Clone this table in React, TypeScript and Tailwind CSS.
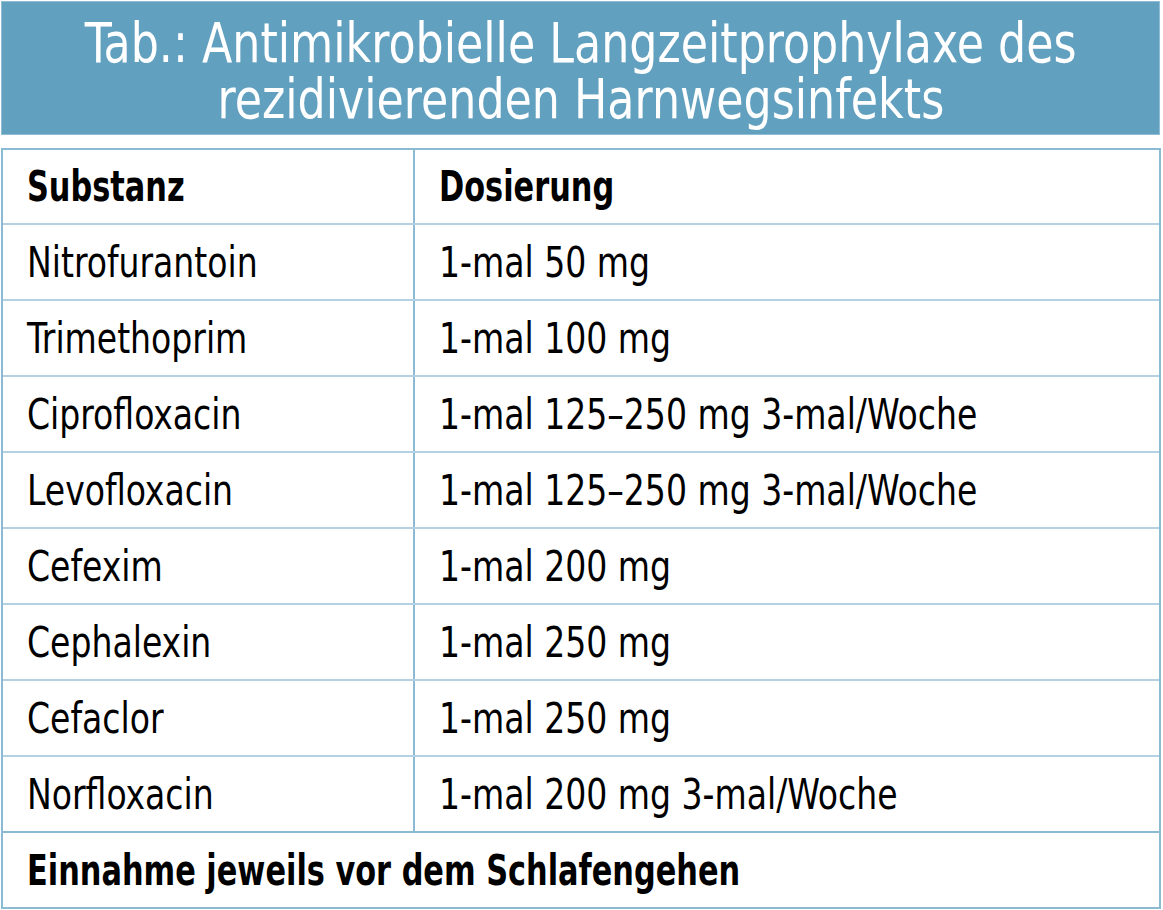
import React from "react";

const rows: [string, string][] = [
  ["Nitrofurantoin", "1-mal 50 mg"],
  ["Trimethoprim", "1-mal 100 mg"],
  ["Ciprofloxacin", "1-mal 125–250 mg 3-mal/Woche"],
  ["Levofloxacin", "1-mal 125–250 mg 3-mal/Woche"],
  ["Cefexim", "1-mal 200 mg"],
  ["Cephalexin", "1-mal 250 mg"],
  ["Cefaclor", "1-mal 250 mg"],
  ["Norfloxacin", "1-mal 200 mg 3-mal/Woche"],
];

const font = "font-['DejaVu_Sans_Condensed','DejaVu_Sans',sans-serif]";

// condensed look: the narrow glyphs are squeezed horizontally from the left edge
const Cell: React.FC<{ children: React.ReactNode; bold?: boolean }> = ({ children, bold }) => (
  <span
    className={`block whitespace-nowrap origin-left ${bold ? "font-bold scale-x-[0.785]" : "scale-x-[0.855]"}`}
  >
    {children}
  </span>
);

const App: React.FC = () => {
  return (
    <div className={`w-[1163px] h-[910px] bg-white text-black ${font}`}>
      <div className="ml-[1px] pt-[1px]">
        <div className="w-[1159px] h-[134px] bg-[#62a0bf] border border-[#8fbdd3] flex flex-col items-center pt-[13px] text-white text-[56px] leading-[56px]">
          <span className="block whitespace-nowrap scale-x-[0.88]">Tab.: Antimikrobielle Langzeitprophylaxe des</span>
          <span className="block whitespace-nowrap scale-x-[0.88]">rezidivierenden Harnwegsinfekts</span>
        </div>
      </div>

      <div className="mt-[13px] ml-[1px] w-[1160px] border-2 border-[#8bbbd3] text-[43px]">
        <div className="grid grid-cols-[412px_1fr] h-[75px] border-b-2 border-[#b3d1e3]">
          <div className="flex items-center pl-[24px] border-r-2 border-[#8bbbd3]">
            <Cell bold>Substanz</Cell>
          </div>
          <div className="flex items-center pl-[24px]">
            <Cell bold>Dosierung</Cell>
          </div>
        </div>
        {rows.map(([name, dose], i) => (
          <div
            key={i}
            className={`grid grid-cols-[412px_1fr] h-[76px] border-b-2 ${i === rows.length - 1 ? "border-[#8bbbd3]" : "border-[#b3d1e3]"}`}
          >
            <div className="flex items-center pl-[24px] border-r-2 border-[#8bbbd3]">
              <Cell>{name}</Cell>
            </div>
            <div className="flex items-center pl-[24px]">
              <Cell>{dose}</Cell>
            </div>
          </div>
        ))}
        <div className="h-[74px] flex items-center pl-[24px]">
          <Cell bold>Einnahme jeweils vor dem Schlafengehen</Cell>
        </div>
      </div>
    </div>
  );
};

export default App;
